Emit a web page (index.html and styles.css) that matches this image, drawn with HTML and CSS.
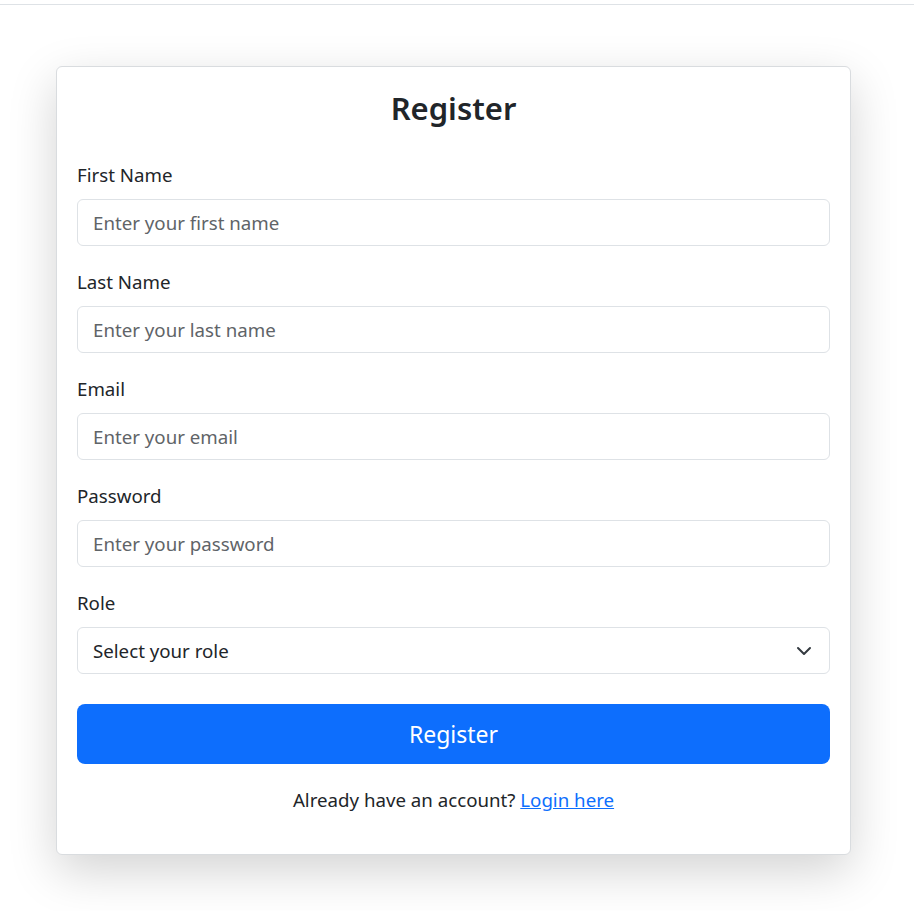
FILE: index.html
```html
<!DOCTYPE html>
<html lang="en">
<head>
    <meta charset="UTF-8">
    <meta name="viewport" content="width=device-width, initial-scale=1.0">
    <title>Register</title>
    <link rel="stylesheet" href="styles.css">
</head>
<body>
    <div class="top-bar"></div>

    <div class="register-card">
        <h2>Register</h2>

        <form class="register-form">
            <div class="form-group">
                <label for="first-name">First Name</label>
                <input type="text" id="first-name" placeholder="Enter your first name">
            </div>
            <div class="form-group">
                <label for="last-name">Last Name</label>
                <input type="text" id="last-name" placeholder="Enter your last name">
            </div>
            <div class="form-group">
                <label for="email">Email</label>
                <input type="email" id="email" placeholder="Enter your email">
            </div>
            <div class="form-group">
                <label for="password">Password</label>
                <input type="password" id="password" placeholder="Enter your password">
            </div>
            <div class="form-group">
                <label for="role">Role</label>
                <div class="select-wrap">
                    <select id="role">
                        <option value="">Select your role</option>
                        <option value="student">Student</option>
                        <option value="teacher">Teacher</option>
                    </select>
                    <svg class="select-arrow" viewBox="0 0 16 16" width="16" height="16">
                        <path d="M2 5l6 6 6-6" fill="none" stroke="#343a40" stroke-width="2" stroke-linecap="round" stroke-linejoin="round"/>
                    </svg>
                </div>
            </div>
            <button type="submit" class="register-btn">Register</button>
        </form>

        <p class="login-text">Already have an account? <a href="#">Login here</a></p>
    </div>
</body>
</html>
```

FILE: styles.css
```css
/* Reset */
* {
    margin: 0;
    padding: 0;
    box-sizing: border-box;
}

body {
    font-family: "Noto Sans", "Open Sans", sans-serif;
    font-size: 18.7px;
    line-height: 24px;
    color: #212529;
    background: #fff;
    min-height: 911px;
}

.top-bar {
    height: 5px;
    border-bottom: 1px solid #dee2e6;
}

.register-card {
    width: 795px;
    margin: 61px 0 0 56px;
    padding: 20px;
    background: #fff;
    border: 1px solid #d9dcdf;
    border-radius: 6px;
    box-shadow: 0 16px 48px rgba(0, 0, 0, 0.175);
}

h2 {
    text-align: center;
    font-size: 31px;
    font-weight: 600;
    line-height: 1.2;
    padding-top: 3px;
    margin-bottom: 36px;
}

.form-group {
    margin-bottom: 24px;
}

.form-group label {
    display: block;
    margin-bottom: 12px;
}

.form-group input,
.form-group select {
    display: block;
    width: 100%;
    height: 47px;
    padding: 10px 15px;
    font-family: inherit;
    font-size: 18.7px;
    color: #212529;
    background: #fff;
    border: 1px solid #dee2e6;
    border-radius: 6px;
    outline: none;
}

.form-group input::placeholder {
    color: #5f6468;
}

.select-wrap {
    position: relative;
}

.form-group select {
    appearance: none;
    -webkit-appearance: none;
    padding-right: 40px;
}

.select-arrow {
    position: absolute;
    right: 18px;
    top: 16px;
    pointer-events: none;
}

.register-btn {
    display: block;
    width: 100%;
    height: 60px;
    margin-top: 30px;
    font-family: inherit;
    font-size: 23px;
    color: #fff;
    background-color: #0d6efd;
    border: none;
    border-radius: 8px;
    cursor: pointer;
}

.login-text {
    text-align: center;
    margin-top: 24px;
    margin-bottom: 22px;
}

.login-text a {
    color: #0d6efd;
}
```
